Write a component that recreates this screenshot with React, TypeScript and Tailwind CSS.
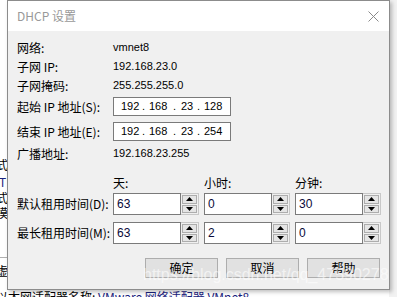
import React from "react";

const cjk = { fontFamily: '"Noto Sans CJK SC", "Liberation Sans", sans-serif' };
const lat = { fontFamily: '"Liberation Sans", "Noto Sans CJK SC", sans-serif' };

function Spin({ value }: { value: string }) {
  return (
    <div className="flex h-[22px]">
      <div className="flex h-full w-[68px] items-center border border-[#7a7a7a] bg-white pl-[3px] text-[12px] text-[#0a0a3a]" style={lat}>
        {value}
      </div>
      <div className="flex h-full w-[18px] flex-col gap-[1px] border border-l-0 border-[#c8c8c8] bg-[#f0f0f0] p-[1px]">
        <div className="flex flex-1 items-center justify-center border border-[#adadad] bg-[#e5e5e5]">
          <svg width="7" height="4" viewBox="0 0 7 4"><path d="M3.5 0 L7 4 L0 4 Z" fill="#000" /></svg>
        </div>
        <div className="flex flex-1 items-center justify-center border border-[#adadad] bg-[#e5e5e5]">
          <svg width="7" height="4" viewBox="0 0 7 4"><path d="M0 0 L7 0 L3.5 4 Z" fill="#000" /></svg>
        </div>
      </div>
    </div>
  );
}

function IpBox({ last }: { last: string }) {
  return (
    <div className="flex h-[19px] w-[118px] items-center border border-[#7a7a7a] bg-white text-[11px] text-black" style={lat}>
      <span className="ml-[7px] w-[17px]">192</span>
      <span className="w-[11px] text-center">.</span>
      <span className="w-[20px]">168</span>
      <span className="w-[11px] text-center">.</span>
      <span className="w-[13px] pl-[1px]">23</span>
      <span className="w-[11px] text-center">.</span>
      <span className="w-[20px]">{last}</span>
    </div>
  );
}

function Btn({ label }: { label: string }) {
  return (
    <div className="flex h-[20px] w-[73px] items-center justify-center border border-[#adadad] bg-[#e1e1e1] text-[12px] text-black" style={cjk}>
      {label}
    </div>
  );
}

export default function App() {
  return (
    <div className="relative h-[297px] w-[397px] overflow-hidden bg-white">
      {/* background window fragments */}
      <div className="absolute right-0 top-0 h-full w-[8px] bg-[#f2f2f2]" />
      <div className="absolute left-[-4px] top-[157px] whitespace-nowrap text-[12px] leading-[16px] text-black" style={cjk}>
        <div>式</div>
        <div className="mt-[1px] pl-[3px] text-[#1a237e]">T</div>
        <div>式</div>
        <div className="mt-[-1px]">模</div>
      </div>
      <div className="absolute left-0 top-[257px] h-[1px] w-[8px] bg-[#b0b0b0]" />
      <div className="absolute left-[-4px] top-[262px] whitespace-nowrap text-[12px] text-black" style={cjk}>虚</div>
      <div className="absolute left-[-4px] top-[288px] whitespace-nowrap text-[12px] text-black" style={cjk}>
        以太网适配器名称: <span className="text-[#1a237e]">VMware 网络适配器 VMnet8</span>
      </div>

      {/* dialog */}
      <div className="absolute left-[7px] top-0 flex h-[290px] w-[383px] flex-col border border-[#8c8c8c] bg-[#f0f0f0] shadow-[2px_2px_4px_rgba(0,0,0,0.25)]">
        <div className="flex h-[30px] items-center justify-between bg-white pl-[9px] pr-[10px]">
          <span className="text-[12px] text-[#999999]" style={cjk}>DHCP 设置</span>
          <svg width="11" height="11" viewBox="0 0 11 11">
            <path d="M0.5 0.5 L10.5 10.5 M10.5 0.5 L0.5 10.5" stroke="#8a8a8a" strokeWidth="1" />
          </svg>
        </div>
        <div className="flex flex-col pl-[9px] pt-[7px] text-[12px] text-black" style={cjk}>
          <div className="flex h-[19px] items-center">
            <span className="w-[96px]">网络:</span>
            <span className="text-[11px]" style={lat}>vmnet8</span>
          </div>
          <div className="flex h-[19px] items-center">
            <span className="w-[96px]">子网 IP:</span>
            <span className="text-[11px]" style={lat}>192.168.23.0</span>
          </div>
          <div className="flex h-[19px] items-center">
            <span className="w-[96px]">子网掩码:</span>
            <span className="text-[11px]" style={lat}>255.255.255.0</span>
          </div>
          <div className="mt-[2px] flex h-[19px] items-center">
            <span className="w-[96px]">起始 IP 地址(S):</span>
            <IpBox last="128" />
          </div>
          <div className="mt-[6px] flex h-[19px] items-center">
            <span className="w-[96px]">结束 IP 地址(E):</span>
            <IpBox last="254" />
          </div>
          <div className="mt-[3px] flex h-[19px] items-center">
            <span className="w-[96px]">广播地址:</span>
            <span className="text-[11px]" style={lat}>192.168.23.255</span>
          </div>
          <div className="mt-[10px] flex h-[19px] items-center">
            <span className="w-[96px]" />
            <span className="w-[91px]">天:</span>
            <span className="w-[91px]">小时:</span>
            <span>分钟:</span>
          </div>
          <div className="mt-[1px] flex items-center">
            <span className="w-[96px]">默认租用时间(D):</span>
            <div className="w-[91px]"><Spin value="63" /></div>
            <div className="w-[91px]"><Spin value="0" /></div>
            <Spin value="30" />
          </div>
          <div className="mt-[7px] flex items-center">
            <span className="w-[96px]">最长租用时间(M):</span>
            <div className="w-[91px]"><Spin value="63" /></div>
            <div className="w-[91px]"><Spin value="2" /></div>
            <Spin value="0" />
          </div>
          <div className="mt-[14px] flex justify-end gap-[8px] pr-[9px]">
            <Btn label="确定" />
            <Btn label="取消" />
            <Btn label="帮助" />
          </div>
        </div>
      </div>

      {/* watermark */}
      <div className="pointer-events-none absolute left-[143px] top-[263px] whitespace-nowrap text-[16px] text-white/60" style={{ fontFamily: '"Liberation Sans", sans-serif' }}>
        https://blog.csdn.net/qq_47590278
      </div>
    </div>
  );
}
